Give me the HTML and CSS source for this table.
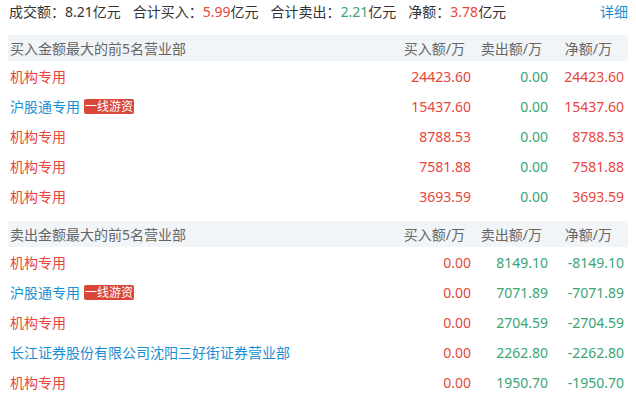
FILE: index.html
```html
<!DOCTYPE html>
<html lang="zh-CN">
<head>
<meta charset="utf-8">
<link rel="stylesheet" href="styles.css">
</head>
<body>
<div class="page">
  <div class="summary">
    <span class="item">成交额：<span class="num">8.21</span>亿元</span>
    <span class="item">合计买入：<span class="num up">5.99</span>亿元</span>
    <span class="item">合计卖出：<span class="num down">2.21</span>亿元</span>
    <span class="item">净额：<span class="num up">3.78</span>亿元</span>
    <a class="more">详细</a>
  </div>

  <div class="table">
    <div class="head">
      <div class="c-name">买入金额最大的前5名营业部</div>
      <div class="c-num">买入额/万</div>
      <div class="c-num">卖出额/万</div>
      <div class="c-num c-last">净额/万</div>
    </div>
    <div class="row">
      <div class="c-name up">机构专用</div>
      <div class="c-num up">24423.60</div>
      <div class="c-num down">0.00</div>
      <div class="c-num up">24423.60</div>
    </div>
    <div class="row">
      <div class="c-name link">沪股通专用<span class="tag">一线游资</span></div>
      <div class="c-num up">15437.60</div>
      <div class="c-num down">0.00</div>
      <div class="c-num up">15437.60</div>
    </div>
    <div class="row">
      <div class="c-name up">机构专用</div>
      <div class="c-num up">8788.53</div>
      <div class="c-num down">0.00</div>
      <div class="c-num up">8788.53</div>
    </div>
    <div class="row">
      <div class="c-name up">机构专用</div>
      <div class="c-num up">7581.88</div>
      <div class="c-num down">0.00</div>
      <div class="c-num up">7581.88</div>
    </div>
    <div class="row">
      <div class="c-name up">机构专用</div>
      <div class="c-num up">3693.59</div>
      <div class="c-num down">0.00</div>
      <div class="c-num up">3693.59</div>
    </div>
  </div>

  <div class="table">
    <div class="head">
      <div class="c-name">卖出金额最大的前5名营业部</div>
      <div class="c-num">买入额/万</div>
      <div class="c-num">卖出额/万</div>
      <div class="c-num c-last">净额/万</div>
    </div>
    <div class="row">
      <div class="c-name up">机构专用</div>
      <div class="c-num up">0.00</div>
      <div class="c-num down">8149.10</div>
      <div class="c-num down">-8149.10</div>
    </div>
    <div class="row">
      <div class="c-name link">沪股通专用<span class="tag">一线游资</span></div>
      <div class="c-num up">0.00</div>
      <div class="c-num down">7071.89</div>
      <div class="c-num down">-7071.89</div>
    </div>
    <div class="row">
      <div class="c-name up">机构专用</div>
      <div class="c-num up">0.00</div>
      <div class="c-num down">2704.59</div>
      <div class="c-num down">-2704.59</div>
    </div>
    <div class="row">
      <div class="c-name link">长江证券股份有限公司沈阳三好街证券营业部</div>
      <div class="c-num up">0.00</div>
      <div class="c-num down">2262.80</div>
      <div class="c-num down">-2262.80</div>
    </div>
    <div class="row">
      <div class="c-name up">机构专用</div>
      <div class="c-num up">0.00</div>
      <div class="c-num down">1950.70</div>
      <div class="c-num down">-1950.70</div>
    </div>
  </div>
</div>
</body>
</html>
```

FILE: styles.css
```css
html, body {
  margin: 0;
  padding: 0;
  background: #ffffff;
}
body {
  font-family: "Noto Sans", "Noto Sans CJK SC", sans-serif;
  font-size: 14px;
  color: #333333;
}
.page {
  padding: 0 8px;
}
.summary {
  display: flex;
  align-items: center;
  height: 23px;
  line-height: 23px;
  margin-bottom: 12px;
  padding-left: 1px;
}
.summary .item {
  margin-right: 12px;
  white-space: nowrap;
}
.summary .more {
  margin-left: auto;
  color: #1e8fd6;
}
.up { color: #e8453c; }
.down { color: #3aa574; }
.link { color: #1a8fd3; }

.table {
  margin-bottom: 10px;
}
.head,
.row {
  display: grid;
  grid-template-columns: 1fr 80px 77px 76px;
  align-items: center;
}
.head {
  height: 26px;
  background: #f2f5f8;
  color: #666666;
}
.row {
  height: 30px;
}
.c-name {
  padding-left: 2px;
  white-space: nowrap;
  display: flex;
  align-items: center;
}
.c-num {
  text-align: right;
  padding-right: 4px;
  white-space: nowrap;
}
.head .c-num {
  padding-right: 10px;
}
.head .c-last {
  padding-right: 16px;
}
.tag {
  display: inline-block;
  margin-left: 4px;
  padding: 0 1px;
  height: 15px;
  line-height: 15px;
  font-size: 12px;
  color: #ffffff;
  background: #d9473a;
  border-radius: 2px;
}
```
